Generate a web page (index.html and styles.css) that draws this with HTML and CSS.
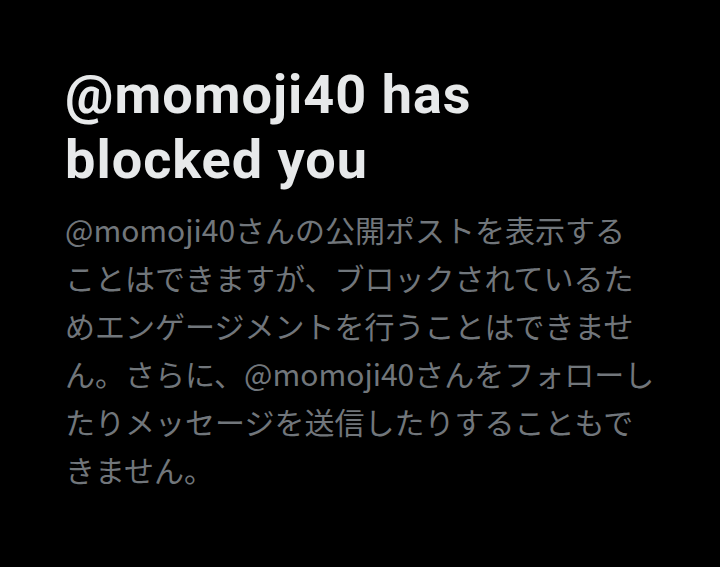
FILE: index.html
```html
<!DOCTYPE html>
<html lang="ja">
<head>
<meta charset="utf-8">
<title>Blocked</title>
<link rel="stylesheet" href="styles.css">
</head>
<body>
<main class="empty-state">
  <h1 class="empty-title">@momoji40 has<br>blocked you</h1>
  <p class="empty-text">@momoji40さんの公開ポストを表示する<br>ことはできますが、ブロックされているた<br>めエンゲージメントを行うことはできませ<br>ん。さらに、@momoji40さんをフォローし<br>たりメッセージを送信したりすることもで<br>きません。</p>
</main>
</body>
</html>
```

FILE: styles.css
```css
html, body {
  margin: 0;
  padding: 0;
  background: #000;
}

body {
  width: 720px;
  height: 567px;
  overflow: hidden;
}

.empty-state {
  padding: 62px 30px 0 65px;
  display: flex;
  flex-direction: column;
}

.empty-title {
  margin: 0;
  font-family: Roboto, "Liberation Sans", sans-serif;
  font-weight: 700;
  font-size: 54px;
  line-height: 65px;
  letter-spacing: 1px;
  color: #e7e9ea;
}

.empty-text {
  margin: 13px 0 0;
  font-family: "Noto Sans CJK JP", sans-serif;
  font-weight: 400;
  font-size: 30px;
  line-height: 48px;
  color: #71767b;
  white-space: nowrap;
}
```
